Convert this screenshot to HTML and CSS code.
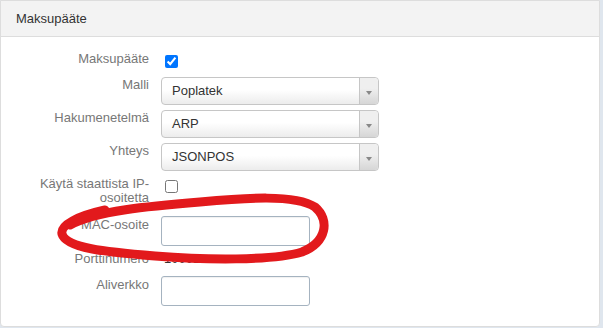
FILE: index.html
```html
<!DOCTYPE html>
<html lang="fi">
<head>
  <meta charset="UTF-8">
  <meta name="viewport" content="width=device-width, initial-scale=1.0">
  <title>Maksupääte</title>
  <link rel="stylesheet" href="styles.css">
</head>
<body>
  <div class="panel">
    <div class="panel-heading">Maksupääte</div>
    <div class="panel-body">
      <div class="row row-check">
        <label class="label">Maksupääte</label>
        <div class="control"><input type="checkbox" class="check" checked></div>
      </div>
      <div class="row">
        <label class="label">Malli</label>
        <div class="control">
          <div class="select"><span class="select-text">Poplatek</span><span class="select-arrow"><b></b></span></div>
        </div>
      </div>
      <div class="row">
        <label class="label">Hakumenetelmä</label>
        <div class="control">
          <div class="select"><span class="select-text">ARP</span><span class="select-arrow"><b></b></span></div>
        </div>
      </div>
      <div class="row">
        <label class="label">Yhteys</label>
        <div class="control">
          <div class="select"><span class="select-text">JSONPOS</span><span class="select-arrow"><b></b></span></div>
        </div>
      </div>
      <div class="row row-static">
        <label class="label">Käytä staattista IP-osoitetta</label>
        <div class="control"><input type="checkbox" class="check"></div>
      </div>
      <div class="row">
        <label class="label label-input">MAC-osoite</label>
        <div class="control"><input type="text" class="text-input"></div>
      </div>
      <div class="row row-text">
        <label class="label">Porttinumero</label>
        <div class="control"><span class="value">10001</span></div>
      </div>
      <div class="row">
        <label class="label label-input">Aliverkko</label>
        <div class="control"><input type="text" class="text-input"></div>
      </div>
    </div>

    <!-- käsin piirretty korostus MAC-kentän ympärillä -->
    <svg class="scribble" width="603" height="328" viewBox="0 0 603 328">
      <path d="M70 225 C 95 211, 150 206, 200 202 C 245 198, 295 194, 315 207 C 330 220, 327 242, 302 252 C 272 261, 205 260, 155 256 C 105 252, 66 248, 62 234 C 60 225, 78 216, 105 210"
            fill="none" stroke="#e2191c" stroke-width="9" stroke-linecap="round" stroke-linejoin="round"/>
    </svg>
  </div>
</body>
</html>
```

FILE: styles.css
```css
body {
  margin: 0;
  background-color: #dfe6ee;
  font-family: "Liberation Sans", Arial, Helvetica, sans-serif;
  font-size: 13px;
  color: #333;
}
.panel {
  position: relative;
  width: 600px;
  height: 327px;
  box-sizing: border-box;
  background-color: #fff;
  border: 1px solid #ddd;
  border-radius: 0 0 4px 4px;
}
.panel-heading {
  height: 35px;
  line-height: 35px;
  padding: 0 15px;
  background-color: #f3f3f3;
  border-bottom: 1px solid #ddd;
  color: #333;
}
.panel-body {
  padding: 14px 0 0 38px;
}
.row {
  display: grid;
  grid-template-columns: 110px 1fr;
  column-gap: 12px;
  margin-bottom: 5px;
}
.row-check {
  height: 21px;
}
.row-static {
  height: 35px;
}
.row-text {
  height: 20px;
}
.label {
  text-align: right;
  color: #777;
  line-height: 14px;
  padding-top: 1px;
}
.label-input {
  padding-top: 2px;
}
.control {
  display: flex;
  align-items: flex-start;
}
.check {
  margin: 4px 0 0 4px;
  width: 13px;
  height: 13px;
}
.select {
  display: flex;
  width: 218px;
  height: 28px;
  box-sizing: border-box;
  border: 1px solid #c6c6c6;
  border-radius: 4px;
  background-image: linear-gradient(to top, #ececec 0%, #fff 55%);
  color: #333;
}
.select-text {
  flex: 1;
  padding-left: 10px;
  line-height: 26px;
}
.select-arrow {
  display: flex;
  align-items: center;
  justify-content: center;
  width: 18px;
  border-left: 1px solid #c6c6c6;
  border-radius: 0 4px 4px 0;
  background-image: linear-gradient(to top, #d6d6d6 0%, #efefef 60%);
}
.select-arrow b {
  width: 0;
  height: 0;
  margin-top: 4px;
  border-left: 3px solid transparent;
  border-right: 3px solid transparent;
  border-top: 4px solid #888;
}
.text-input {
  width: 149px;
  height: 30px;
  box-sizing: border-box;
  margin: 0;
  border: 1px solid #a5b3c0;
  border-radius: 3px;
  box-shadow: inset 0 1px 1px rgba(0, 0, 0, 0.06);
  font: inherit;
}
.value {
  padding-left: 3px;
  line-height: 14px;
  padding-top: 1px;
  color: #333;
}
.scribble {
  position: absolute;
  left: -1px;
  top: -1px;
  pointer-events: none;
}
```
